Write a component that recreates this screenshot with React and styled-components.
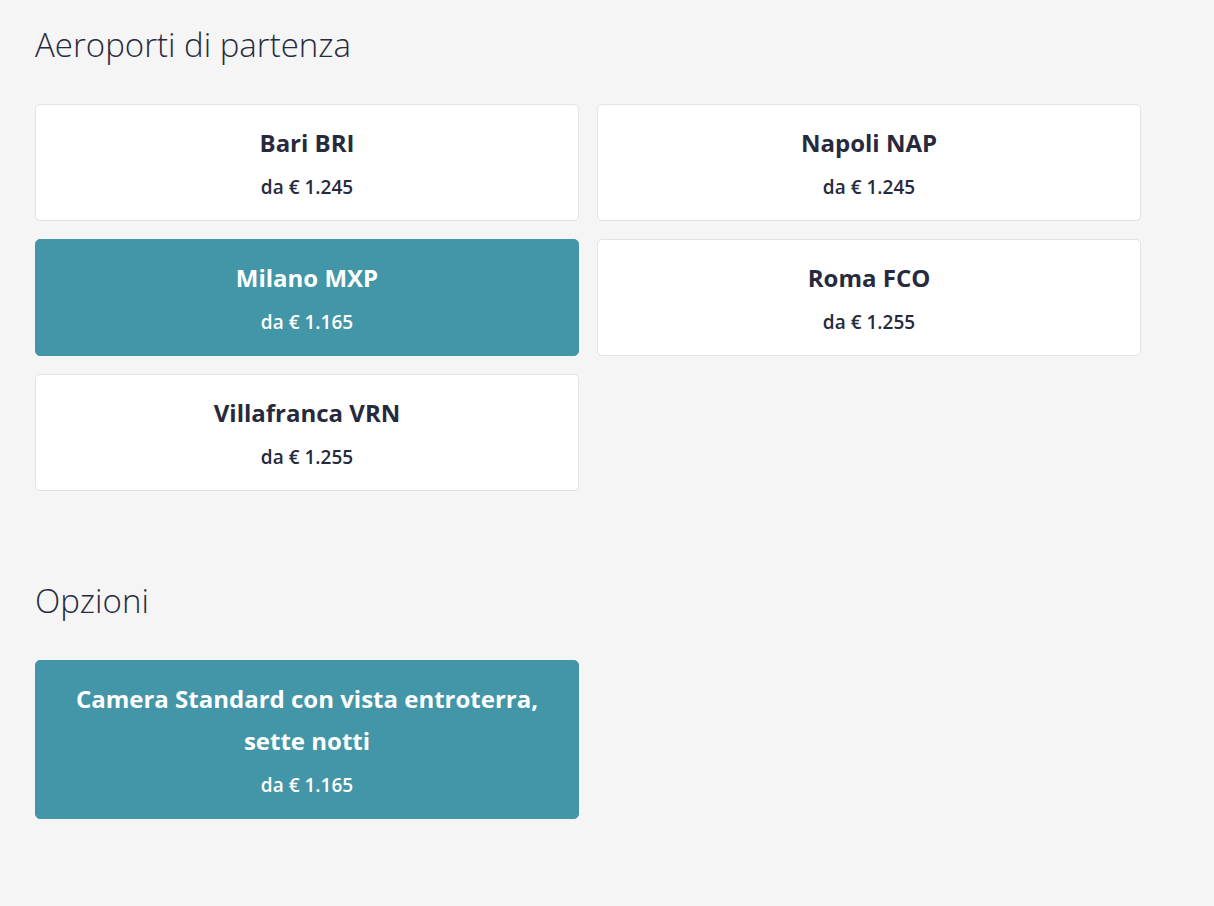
import styled, { createGlobalStyle } from "styled-components";

const GlobalStyle = createGlobalStyle`
  html, body {
    margin: 0;
    background: #f5f5f5;
  }
  body {
    font-family: "Open Sans", "Noto Sans", sans-serif;
    color: #272a3d;
  }
`;

const Page = styled.main`
  padding: 25px 35px 60px;
`;

const Section = styled.section`
  & + & {
    margin-top: 90px;
  }
`;

const Heading = styled.h2`
  margin: 0 0 39px;
  font-size: 33px;
  line-height: 40px;
  font-weight: 300;
  color: #272a3d;
`;

const Grid = styled.div`
  display: grid;
  grid-template-columns: 544px 544px;
  gap: 18px;
`;

const Card = styled.button`
  box-sizing: border-box;
  display: flex;
  flex-direction: column;
  align-items: center;
  padding: 17px 24px 19px;
  border: 1px solid ${(p) => (p.$selected ? "#4396a7" : "#e3e3e3")};
  border-radius: 5px;
  background: ${(p) => (p.$selected ? "#4396a7" : "#fff")};
  color: ${(p) => (p.$selected ? "#fff" : "#272a3d")};
  font-family: inherit;
  text-align: center;
  cursor: pointer;
`;

const Name = styled.span`
  display: block;
  font-size: 24px;
  line-height: 42px;
  font-weight: 700;
`;

const Price = styled.span`
  display: block;
  margin-top: 10px;
  font-size: 19px;
  line-height: 27px;
  font-weight: 600;
`;

const airports = [
  { name: "Bari BRI", price: "1.245" },
  { name: "Napoli NAP", price: "1.245" },
  { name: "Milano MXP", price: "1.165", selected: true },
  { name: "Roma FCO", price: "1.255" },
  { name: "Villafranca VRN", price: "1.255" },
];

const options = [
  {
    name: "Camera Standard con vista entroterra, sette notti",
    price: "1.165",
    selected: true,
  },
];

const Choice = ({ name, price, selected }) => (
  <Card $selected={selected}>
    <Name>{name}</Name>
    <Price>da € {price}</Price>
  </Card>
);

export default function App() {
  return (
    <>
      <GlobalStyle />
      <Page>
        <Section>
          <Heading>Aeroporti di partenza</Heading>
          <Grid>
            {airports.map((a) => (
              <Choice key={a.name} {...a} />
            ))}
          </Grid>
        </Section>
        <Section>
          <Heading>Opzioni</Heading>
          <Grid>
            {options.map((o) => (
              <Choice key={o.name} {...o} />
            ))}
          </Grid>
        </Section>
      </Page>
    </>
  );
}
